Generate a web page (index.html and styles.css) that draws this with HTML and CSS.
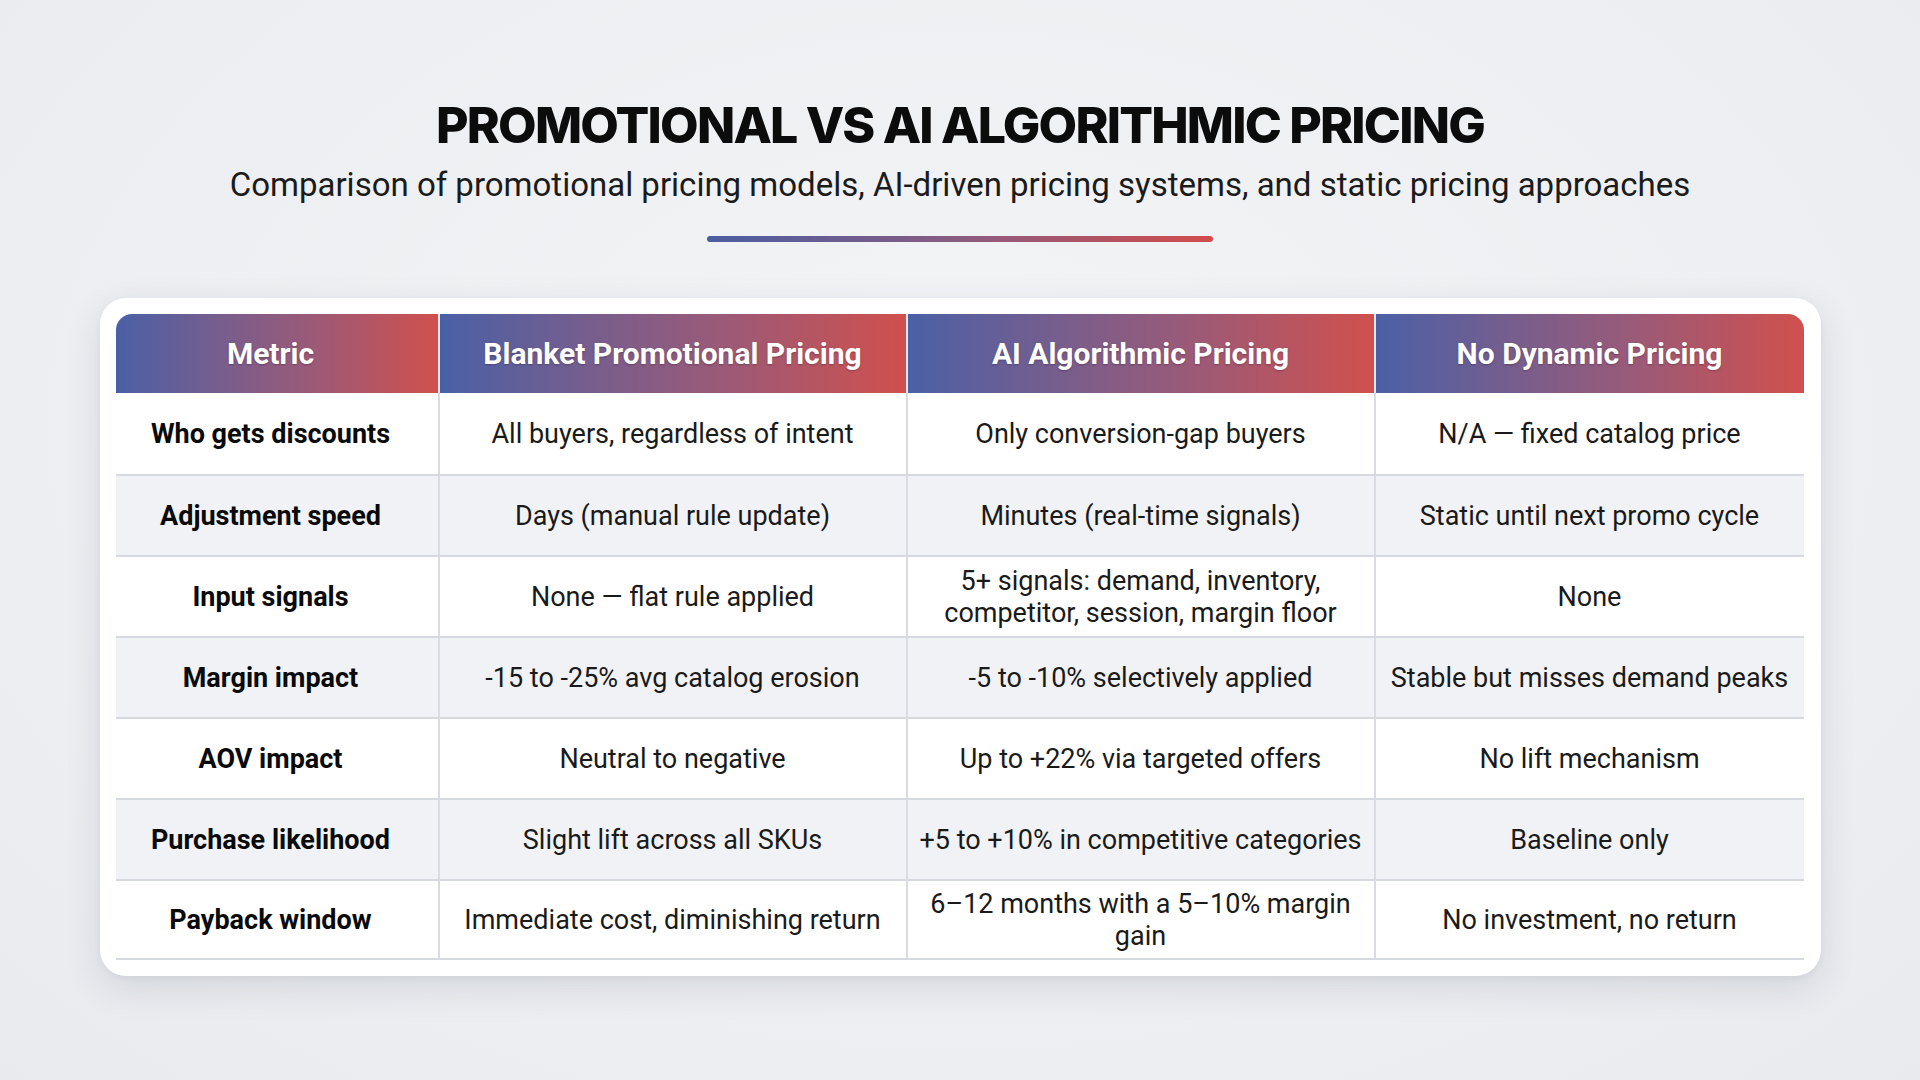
FILE: index.html
```html
<!DOCTYPE html>
<html lang="en">
<head>
<meta charset="utf-8">
<title>Promotional vs AI Algorithmic Pricing</title>
<link rel="stylesheet" href="styles.css">
</head>
<body>
<main class="page">
  <header class="intro">
    <h1 class="title">PROMOTIONAL VS AI ALGORITHMIC PRICING</h1>
    <p class="subtitle">Comparison of promotional pricing models, AI-driven pricing systems, and static pricing approaches</p>
    <div class="divider"></div>
  </header>
  <section class="card">
    <table class="grid">
      <colgroup>
        <col class="c-metric"><col class="c-wide"><col class="c-wide"><col class="c-last">
      </colgroup>
      <thead>
        <tr>
          <th>Metric</th>
          <th>Blanket Promotional Pricing</th>
          <th>AI Algorithmic Pricing</th>
          <th>No Dynamic Pricing</th>
        </tr>
      </thead>
      <tbody>
        <tr>
          <td class="label">Who gets discounts</td>
          <td>All buyers, regardless of intent</td>
          <td>Only conversion-gap buyers</td>
          <td>N/A — fixed catalog price</td>
        </tr>
        <tr>
          <td class="label">Adjustment speed</td>
          <td>Days (manual rule update)</td>
          <td>Minutes (real-time signals)</td>
          <td>Static until next promo cycle</td>
        </tr>
        <tr>
          <td class="label">Input signals</td>
          <td>None — flat rule applied</td>
          <td>5+ signals: demand, inventory,<br>competitor, session, margin floor</td>
          <td>None</td>
        </tr>
        <tr>
          <td class="label">Margin impact</td>
          <td>-15 to -25% avg catalog erosion</td>
          <td>-5 to -10% selectively applied</td>
          <td>Stable but misses demand peaks</td>
        </tr>
        <tr>
          <td class="label">AOV impact</td>
          <td>Neutral to negative</td>
          <td>Up to +22% via targeted offers</td>
          <td>No lift mechanism</td>
        </tr>
        <tr>
          <td class="label">Purchase likelihood</td>
          <td>Slight lift across all SKUs</td>
          <td>+5 to +10% in competitive categories</td>
          <td>Baseline only</td>
        </tr>
        <tr>
          <td class="label">Payback window</td>
          <td>Immediate cost, diminishing return</td>
          <td>6–12 months with a 5–10% margin<br>gain</td>
          <td>No investment, no return</td>
        </tr>
      </tbody>
    </table>
  </section>
</main>
</body>
</html>
```

FILE: styles.css
```css
* { box-sizing: border-box; }
html, body { margin: 0; padding: 0; }
body {
  width: 1920px;
  height: 1080px;
  overflow: hidden;
  background: radial-gradient(ellipse at 50% 40%, #f3f4f6 0%, #eceef1 70%, #e8eaee 100%);
  font-family: Roboto, "Noto Sans", "Liberation Sans", sans-serif;
  color: #161616;
}
.page {
  display: flex;
  flex-direction: column;
  align-items: center;
  padding-top: 92px;
}
.intro {
  display: flex;
  flex-direction: column;
  align-items: center;
}
.title {
  margin: 0;
  font-family: Inter, Roboto, sans-serif;
  font-weight: 800;
  font-size: 50px;
  line-height: 67px;
  letter-spacing: -1.8px;
  color: #0c0c0c;
}
.subtitle {
  margin: 6px 0 0;
  font-size: 33px;
  line-height: 39px;
  font-weight: 400;
  color: #1b1b1b;
}
.divider {
  margin-top: 32px;
  width: 506px;
  height: 6px;
  border-radius: 3px;
  background: linear-gradient(90deg, #4a5ea2 0%, #8a5c80 50%, #d24c4b 100%);
}
.card {
  margin-top: 56px;
  width: 1721px;
  padding: 16px 17px 16px 16px;
  background: #ffffff;
  border-radius: 26px;
  box-shadow: 0 12px 36px rgba(40, 50, 70, 0.12), 0 2px 6px rgba(40, 50, 70, 0.05);
}
.grid {
  width: 1688px;
  border-collapse: separate;
  border-spacing: 0;
  table-layout: fixed;
}
.c-metric { width: 322px; }
.c-wide { width: 468px; }
.c-last { width: 430px; }
.grid th {
  height: 79px;
  padding: 0 6px;
  font-weight: 700;
  font-size: 30px;
  letter-spacing: 0;
  color: #ffffff;
  text-shadow: 0 1px 2px rgba(40, 20, 40, 0.35);
  background: linear-gradient(90deg, #4a60a6 0%, #745e8f 30%, #9a5a78 60%, #d0504d 100%);
  border-left: 2px solid #e4e6ee;
}
.grid th:first-child { border-left: none; border-top-left-radius: 16px; padding-right: 18px; }
.grid th:last-child { border-top-right-radius: 16px; }
.grid td {
  height: 81px;
  padding: 0 6px;
  text-align: center;
  vertical-align: middle;
  font-size: 27px;
  line-height: 32px;
  color: #1a1a1a;
  border-top: 2px solid #d6d9df;
  border-left: 2px solid #d9dce2;
}
.grid td:first-child { border-left: none; padding-right: 18px; }
.grid tbody tr:nth-child(even) td { background: #f1f2f5; }
.grid tbody tr:first-child td { border-top: none; }
.grid tbody tr:last-child td { border-bottom: 2px solid #d6d9df; }
.grid td.label {
  font-weight: 700;
  color: #0a0a0a;
}
```
